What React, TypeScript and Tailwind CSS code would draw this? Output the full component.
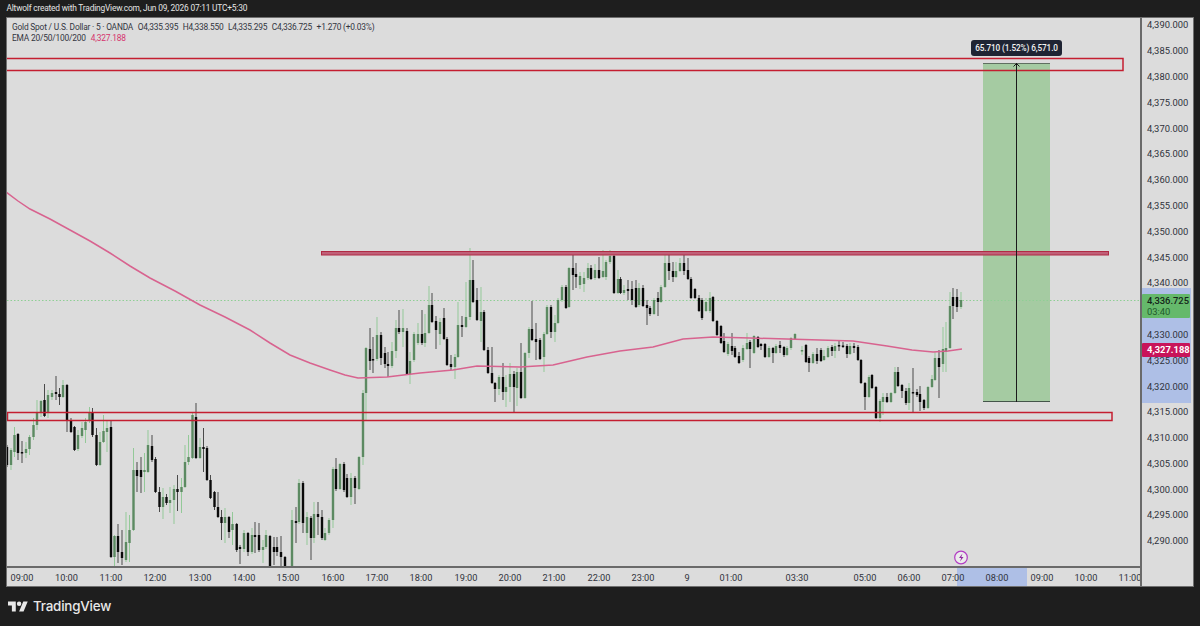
const candles: number[][] = [
  // x, up, top, bottom, high, low
  [7,0,447,465,445,467],[11,1,450,465,448,470],[14.5,1,435,452,427,457],[18,0,434,453,433,460],[22,0,452,453.5,441,463],[26,1,449,453,442,458],[29.5,1,437,449,435,455],[33.5,1,425,437,418,440],[37,1,412,425,400,430],[41,1,401,412,400,417],[44.5,0,400,416,384,417],[48,1,395,412,390,418],[52,1,393,397,390,400],[56,0,392,394,376,400],[59.5,0,394,397,388,405],[63,1,385,397,380,398],[67,0,385,421,384,432],[71,0,420,432,418,433],[74.5,0,427,450,426,451],[78,1,435,449,430,451],[82,1,428,436,422,438],[85.5,1,422,430,418,443],[89.5,1,412,421,407,423],[92.5,0,412,435,408,437],[96.5,0,435,465,428,466],[100,1,442,465,432,466],[103.5,1,431,442,415,443],[107,1,428,432,420,452],
  [111,0,427,557,421,558],[114.5,1,536,557,535,566],[118,0,536,552,524,563],[122,0,552,558,530,565],[126,1,542,560,512,562],[129.5,1,530,543,515,562],[133.5,1,470,530,448,531],[137,0,470,476,462,492],[141,0,470,477,457,493],[144.5,1,470,472,453,492],[148,1,445,472,430,473],[152,0,446,460,435,462],[155.5,0,459,492,457,493],[159.5,0,492,507,487,512],[163,1,497,507,488,519],[166.5,0,497,503,494,505],[170,1,500,503,487,513],[174,1,489,500,485,524],[177.5,0,489,492,475,511],[181.5,1,487,492,478,513],[185,1,462,487,445,488],[188.5,1,457,462,435,465],[192.5,1,415,458,413,459],[196,0,417,458,403,459],[200,1,447,458,438,459],[203.5,0,447,449,428,472],[207,0,448,480,446,481],[210.5,0,480,498,475,499],[214.5,0,492,507,491,510],[218,0,507,517,492,518],[221.5,0,517,523,510,540],[225,1,517,523,508,543],[229,0,517,532,516,538],[232.5,1,524,530,512,545],
  [236.7,0,524,550,523,552],[240,0,547,549,545,564],[244,1,533,549,530,552],[248,0,533,552,532,556],[252,1,535,552,528,554],[255,0,535,537,522,553],[259,0,535,550,523,552],[263,1,547,550,540,563],[266,1,535,547,530,549],[270,0,536,566,535,566],[274,0,547,552,537,565],[277,0,547,552,537,556],[281,0,552,557,536,566],[285,0,557,566,556,566],[292,1,520,566,510,566],[296,0,521,523,507,543],[299,1,483,522,479,524],[303,0,483,523,481,533],[307,1,517,533,512,545],[311,0,518,538,516,560],[314,1,514,538,502,543],[318,0,514,517,502,535],[322,0,517,538,510,540],[325,1,533,540,528,541],[329,1,520,533,518,535],[333,1,469,520,467,528],[336,0,469,489,458,491],[340,1,464,489,463,490],[344,0,464,490,462,492],[347,0,478,497,474,498],[351,1,478,497,473,505],[355,0,478,488,476,504],[359,1,457,489,456,490],[363,1,393,457,390,465],[366,1,348,393,347,420],
  [370,0,349,361,328,370],[373,0,359,360.5,337,373],[377,1,335,359,317,361],[381,0,335,358,332,365],[385,0,353,364,347,368],[388,0,364,366,352,377],[392,1,351,366,342,368],[396,1,328,351,320,358],[399,0,328,332,310,334],[403,1,328,332,309,347],[407,0,331,374,328,375],[410,1,361,374,352,384],[414,1,334,360,332,362],[418,1,334,343,323,345],[422,0,334,343,310,345],[425,1,333,343,314,347],[429,1,305,333,286,334],[432,0,305,322,293,323],[436,0,321,330,316,349],[440,1,322,334,318,345],[444,0,318,339,308,340],[447,0,339,365,337,366],[451,0,364,367,355,370],[455,1,357,367,354,379],[458,1,325,357,302,358],[462,0,325,327,316,337],[466,1,317,327,282,328],[470,1,280,317,248,320],[473,0,280,302,260,303],[477,0,300,320,288,321],[481,1,312,321,287,342],[484,0,312,350,310,351],[488,0,350,373,347,374],[492,0,373,383,347,384],[495,0,383,389,382,402],[499,1,377,389,375,395],[503,0,377,392,363,400],[506,1,387,392,375,407],[510,1,374,387,363,402],[514,0,374,387,371,412],[517,1,372,388,368,406],[521,0,372,398,343,399],[525,1,353,398,352,399],[529,1,329,353,327,358],[532,0,329,340,301,341],[536,0,339,342,323,360],[540,0,340,359,338,360],[544,1,334,357,332,372],[547,1,307,334,305,335],[551,0,307,332,305,338],[555,1,323,332,315,342],[558,1,300,323,298,324],[562,1,287,300,285,302],[566,0,287,308,285,309],[569,1,268,307,267,308],[573,0,268,275,254,290],[576,0,274,277,263,288],[580,1,276,285,272,289],[584,1,278,284,272,292],[588,1,268,278,263,280],[591,0,268,279,265,280],[595,1,270,278,264,280],[599,0,270,278,257,279],[603,1,271,277,250,278],[606,1,262,277,260,280],[610,1,256,262,250,264],[614,0,256,293,254,294],
  [618,1,279,293,270,294],[620.5,0,279,293,277,294],[624,1,290,293,285,295],[628,0,289,291,280,300],[632,0,289,300,281,305],[636,0,288,307,280,308],[639,1,288,305,283,307],[643,0,288,306,285,307],[647,0,305,308,300,325],[650,0,308,314,306,316],[654,1,300,314,298,315],[658,0,298,302,292,316],[661,1,287,302,285,303],[665,1,263,287,255,288],[669,0,263,271,255,280],[673,0,271,277,262,282],[676,1,271,277,262,278],[680,1,263,271,258,272],[684,0,263,271,252,275],[688,0,270,279,258,280],[691,0,279,298,277,299],[695,0,289,298,288,299],[699,0,298,311,295,312],[702,0,300,318,298,320],[706,1,302,311,298,312],[710,1,298,311,292,313],[713,0,297,321,296,322],[717,0,321,335,320,336],[721,0,326,343,325,344],[724,0,341,352,333,353],[728,1,344,354,342,356],[732,0,346,351,333,355],[735,0,348,357,346,358],[739,0,356,363,352,364],[743,1,348,360,345,362],[747,1,343,349,333,350],[750,0,342,349,340,368],[754,1,336,353,335,354],[758,0,337,347,336,348],[761,0,344,346,343,350],[765,0,344,357,343,358],[769,1,348,357,346,358],[773,0,348,353,347,363],[776,1,346,353,344,354],[780,0,345,348,341,353],[784,0,347,355,346,357],[787,1,348,355,346,356],[791,1,338,348,337,350],[795,1,334,339,333,340],
  [802,1,350,351.5,346,355],[806,0,345,362,344,363],[809,0,358,363,356,372],[813,1,354,363,352,364],[817,0,354,361,348,364],[821,0,350,361,348,362],[824,1,356,360,350,361],[828,1,348,357,346,358],[832,0,347,351,345,356],[835,1,346,351,343,358],[839,0,345,346.5,340,351],[843,0,345.5,347,342,348],[847,0,346,354,344,358],[850,1,346,354,343,355],[854,0,346,348,343,353],[858,0,347,360,345,361],[861,0,360,383,359,384],[865,0,383,397,382,410],[869,1,377,397,375,398],[872,0,375,388,374,389],[876,0,387,418,386,419],[880,1,401,418,399,422],[883,1,397,402,393,415],[887,0,397,402,393,403],[891,1,393,402,392,403],[895,1,372,393,367,394],[898,0,372,386,367,387],[902,0,385,391,384,398],[906,0,391,403,388,405],[909,1,388,403,383,410],[913,0,392,393.5,368,412],[917,0,392,395,389,397],[920,0,394,402,386,411],[924,0,400,408,399,410],[928,1,387,408,386,409],[932,1,379,387,375,388],[935,1,358,380,352,381],[939,0,358,367,350,398],[943,1,349,364,327,372],[946,1,348,352,322,372],[950,1,306,348,292,349],[953,0,297,306,288,319],[957,0,297,307,289,312],[961,1,300,307,292,309],
];

const ema = "6,192 18,201 30,209 50,219 70,230 90,241 110,253 130,266 150,278 175,291 200,305 225,317 250,330 270,343 290,355 310,363 330,370 345,375 358,378 387,377 420,373 453,370 477,366 520,367 553,365 587,357 620,351 653,347 683,339 713,337 750,338 787,339 820,340 853,341 887,346 912,350 933,352 948,351 962,349";

const prices = ["4,390.000","4,385.000","4,380.000","4,375.000","4,370.000","4,365.000","4,360.000","4,355.000","4,350.000","4,345.000","4,340.000","","4,330.000","4,325.000","4,320.000","4,315.000","4,310.000","4,305.000","4,300.000","4,295.000","4,290.000"];

const times: [string, number][] = [["09:00",22],["10:00",66.5],["11:00",111],["12:00",155],["13:00",200],["14:00",244],["15:00",288],["16:00",333],["17:00",377],["18:00",421],["19:00",466],["20:00",510],["21:00",554],["22:00",599],["23:00",643],["9",687],["01:00",731],["03:30",797],["05:00",865],["06:00",909],["07:00",953],["08:00",997],["09:00",1042],["10:00",1086],["11:00",1130]];

function Chart() {
  return (
    <svg className="absolute inset-0 h-full w-full" viewBox="7 18 1133 548">
      <rect x="983" y="63" width="67" height="339" fill="#a5cba2" />
      <line x1="7" x2="1140" y1="300.5" y2="300.5" stroke="#8fcf95" strokeWidth="1" strokeDasharray="1.5 2" />
      {candles.map(([x, up, top, bottom, high, low], i) => (
        <g key={i}>
          <line x1={x} x2={x} y1={high} y2={low} stroke={up ? "#93c998" : "#4a4a4a"} strokeWidth="1" />
          <rect x={x - 1.2} y={top} width="2.4" height={bottom - top} fill={up ? "#5c8a62" : "#0a0a0a"} />
        </g>
      ))}
      <polyline points={ema} fill="none" stroke="#d8638f" strokeWidth="1.5" />
      <rect x="3" y="58.5" width="1120" height="12" fill="none" stroke="#c41e30" strokeWidth="1.5" />
      <rect x="321.5" y="251.5" width="787" height="3.5" fill="#c06078" stroke="#b02a44" strokeWidth="1" />
      <rect x="7.5" y="412.5" width="1104.5" height="8" fill="none" stroke="#c41e30" strokeWidth="1.5" />
      <line x1="983" x2="1050" y1="63.5" y2="63.5" stroke="#5f6f60" strokeWidth="1" />
      <line x1="983" x2="1050" y1="401.5" y2="401.5" stroke="#44554a" strokeWidth="1" />
      <line x1="1016.5" x2="1016.5" y1="63" y2="402" stroke="#1b1b1b" strokeWidth="1" />
      <polyline points="1013.5,66.5 1016.5,63.5 1019.5,66.5" fill="none" stroke="#1b1b1b" strokeWidth="1" />
      <circle cx="961" cy="557.5" r="6.3" fill="#ececec" stroke="#b23cc4" strokeWidth="1.2" />
      <path d="M962.5 553.5l-3.5 4.5h2.2l-1.2 3.5 3.5-4.6h-2.2z" fill="#8e2ba0" />
    </svg>
  );
}

export default function App() {
  return (
    <div className="flex h-[626px] w-[1200px] flex-col overflow-hidden bg-[#1e1e1e] font-['Roboto',sans-serif] text-[#2a2e39]">
      <div className="flex h-[17px] items-center pl-[6.5px] text-[8.4px] tracking-[-0.2px] text-[#e4e4e4]">
        Altwolf created with TradingView.com, Jun 09, 2026 07:11 UTC+5:30
      </div>
      <div className="ml-[6px] flex h-[570px] w-[1188px] border border-[#707070] bg-[#dcdcdc]">
        <div className="flex w-[1133px] flex-col">
          <div className="relative h-[548px] overflow-hidden">
            <Chart />
            <div className="absolute left-[5px] top-[4px] text-[8.4px] leading-[11px] tracking-[-0.2px] text-[#33363f]">
              <div className="flex gap-[4.5px] whitespace-pre">
                <span>Gold Spot / U.S. Dollar · 5 · OANDA</span>
                <span>O4,335.395</span>
                <span>H4,338.550</span>
                <span>L4,335.295</span>
                <span>C4,336.725</span>
                <span>+1.270 (+0.03%)</span>
              </div>
              <div className="flex gap-[5px]">
                <span>EMA 20/50/100/200</span>
                <span className="text-[#d6336c]">4,327.188</span>
              </div>
            </div>
            <div className="absolute left-[964px] top-[22px] flex h-[16px] w-[91px] items-center justify-center rounded-[3px] bg-[#1f2433] text-[8.2px] font-medium tracking-[-0.1px] text-[#f2f2f2]">
              65.710 (1.52%) 6,571.0
            </div>
          </div>
          <div className="relative h-[20px] border-t-2 border-[#6a6a6a] text-[9.2px] text-[#2f323b]">
            <div className="absolute bottom-0 left-[950px] top-0 w-[70px] bg-[#aebfe6]" />
            {times.map(([label, x]) => (
              <span key={label + x} className="absolute top-[3px] -translate-x-1/2" style={{ left: x - 7 }}>
                {label}
              </span>
            ))}
          </div>
        </div>
        <div className="relative w-[53px] overflow-hidden border-l-2 border-[#6a6a6a] text-[9.4px] text-[#2f323b]">
          <div className="absolute left-0 right-[2px] top-[270px] h-[115px] bg-[#aebfe6]" />
          <div className="relative -mt-[5.5px] flex flex-col">
            {prices.map((p, i) => (
              <div key={i} className="flex h-[25.8px] items-center pl-[5px]">
                {p}
              </div>
            ))}
          </div>
          <div className="absolute left-0 top-[275.5px] flex h-[24px] w-[48px] flex-col justify-center rounded-[1px] bg-[#65b96b] pl-[5px] leading-[11px]">
            <span className="font-medium text-[#13241a]">4,336.725</span>
            <span className="text-[#1f5a2c]">03:40</span>
          </div>
          <div className="absolute left-0 top-[325px] flex h-[13.5px] w-[48px] items-center rounded-[1px] bg-[#c8145a] pl-[5px] font-bold text-white">
            4,327.188
          </div>
        </div>
      </div>
      <div className="flex flex-1 items-center gap-[5px] pb-[1px] pl-[8px]">
        <svg width="20" height="11" viewBox="0 3 36 20" fill="#e8e8e8" preserveAspectRatio="none">
          <path d="M14 22H7V11H0V4h14v18zM28 22h-8l7.5-18h8L28 22z" />
          <circle cx="20" cy="8" r="4" />
        </svg>
        <span className="font-['Inter',sans-serif] text-[13.4px] font-medium tracking-[-0.2px] text-[#e8e8e8]">TradingView</span>
      </div>
    </div>
  );
}
